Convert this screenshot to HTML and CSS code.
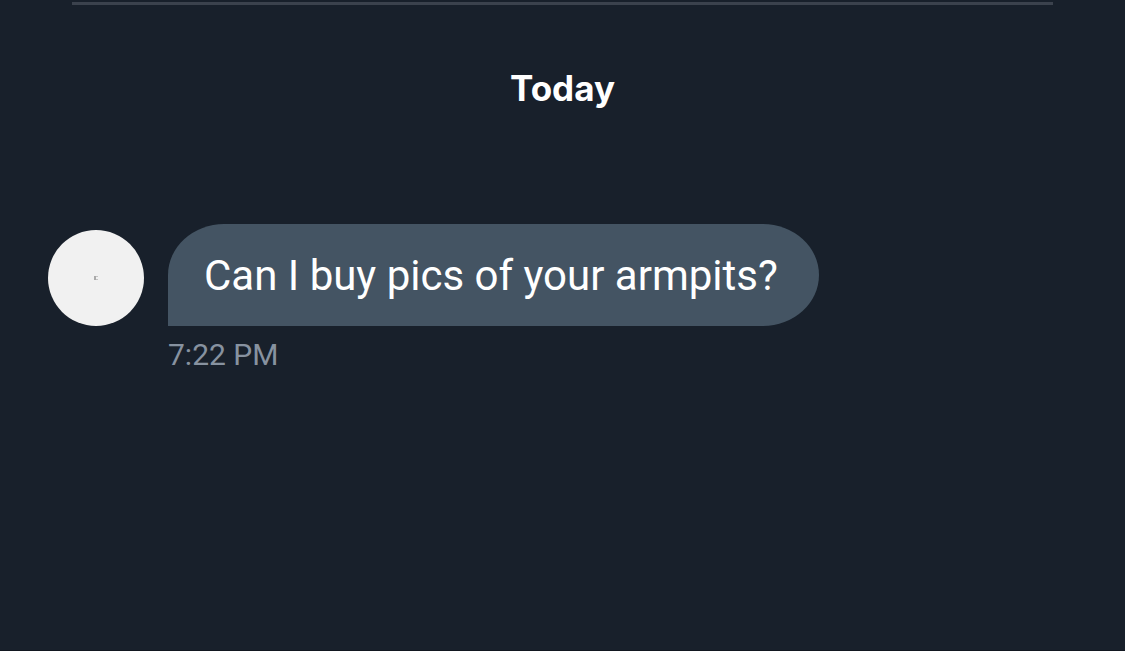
FILE: index.html
```
<!DOCTYPE html>
<html lang="en">
<head>
<meta charset="utf-8">
<meta name="viewport" content="width=device-width, initial-scale=1">
<title>Conversation</title>
<link rel="stylesheet" href="styles.css">
</head>
<body>
<main class="conversation">
  <hr class="divider">
  <h2 class="day">Today</h2>
  <article class="message">
    <svg class="avatar" viewBox="0 0 96 96" role="img" aria-label="Sender avatar">
      <circle cx="48" cy="48" r="48" fill="#f1f1f1"/>
      <path d="M47 46v4" fill="none" stroke="#aaa" stroke-width="2"/>
      <path d="M48 46.500h2M48 49.500h2" fill="none" stroke="#c4c4c4" stroke-width="1"/>
    </svg>
    <div class="content">
      <p class="bubble">Can I buy pics of your armpits?</p>
      <time class="time" datetime="19:22">7:22 PM</time>
    </div>
  </article>
</main>
</body>
</html>
```
FILE: styles.css
```
body {
  margin: 0;
  background: #18202b;
  color: #fff;
  font-family: Roboto, "Liberation Sans", sans-serif;
}

.conversation {
  box-sizing: border-box;
  min-height: 100vh;
  padding: 2px 48px 48px;
  border-bottom: 1px solid #121720;
}

.divider {
  height: 3px;
  margin: 0 24px;
  border: 0;
  background: #3b424d;
}

.day {
  margin: 60px 0 113px;
  font-family: Inter, "Liberation Sans", sans-serif;
  font-size: 35px;
  font-weight: 700;
  line-height: 46px;
  text-align: center;
}

.message {
  display: flex;
  align-items: flex-start;
  gap: 24px;
}

.avatar {
  flex: none;
  width: 96px;
  height: 96px;
  margin-top: 6px;
}

.content {
  display: flex;
  flex-direction: column;
  align-items: flex-start;
}

.bubble {
  margin: 0;
  padding: 25px 41px 23px 36px;
  border-radius: 56px 56px 56px 0 / 51px 51px 51px 0;
  background: #445463;
  font-size: 42px;
  line-height: 54px;
}

.time {
  margin-top: 10px;
  color: #8792a0;
  font-size: 30px;
  line-height: 38px;
}
```
